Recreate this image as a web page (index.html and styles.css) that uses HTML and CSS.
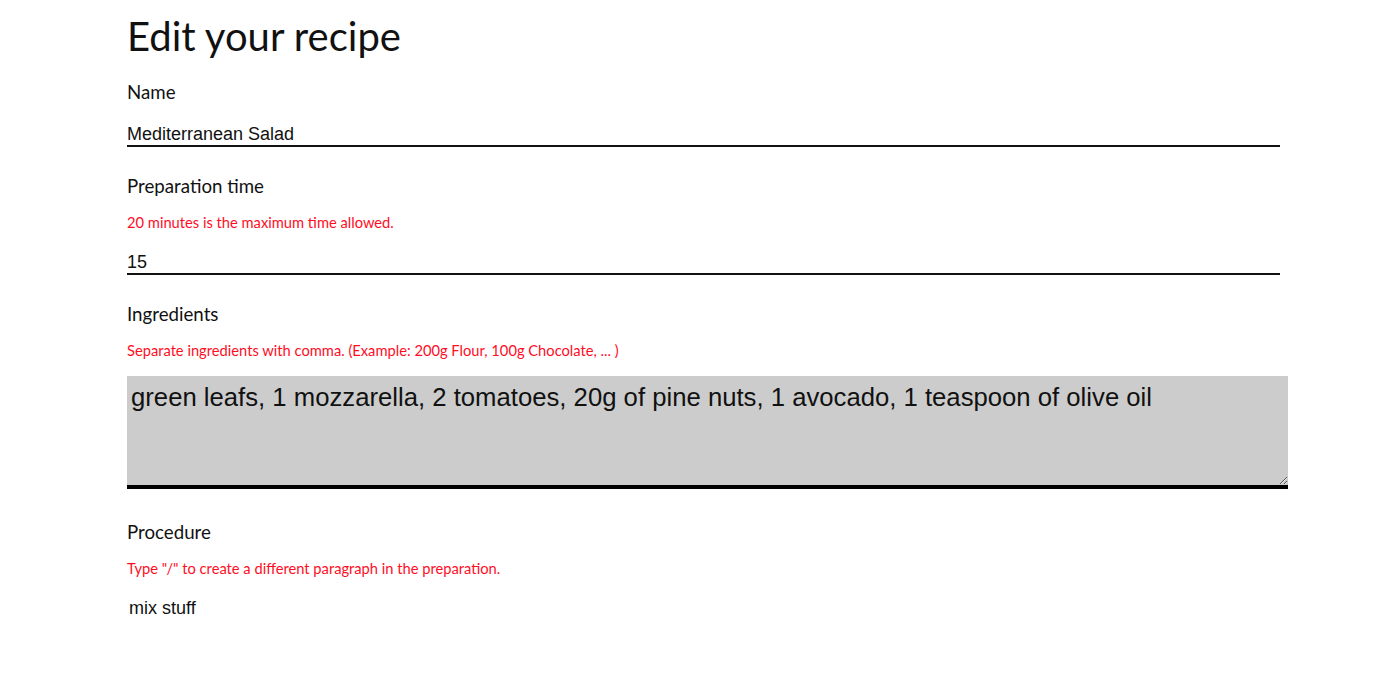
FILE: index.html
```html
<!DOCTYPE html>
<html lang="en">
<head>
<meta charset="utf-8">
<title>Edit your recipe</title>
<link rel="stylesheet" href="styles.css">
</head>
<body>
<main class="page">
  <h1 class="title">Edit your recipe</h1>
  <form class="recipe-form">
    <div class="field">
      <label class="label" for="name">Name</label>
      <input class="line-input" id="name" type="text" value="Mediterranean Salad">
    </div>
    <div class="field">
      <label class="label" for="time">Preparation time</label>
      <p class="hint">20 minutes is the maximum time allowed.</p>
      <input class="line-input" id="time" type="text" value="15">
    </div>
    <div class="field">
      <label class="label" for="ingredients">Ingredients</label>
      <p class="hint">Separate ingredients with comma. (Example: 200g Flour, 100g Chocolate, ... )</p>
      <textarea class="big-area" id="ingredients">green leafs, 1 mozzarella, 2 tomatoes, 20g of pine nuts, 1 avocado, 1 teaspoon of olive oil</textarea>
    </div>
    <div class="field">
      <label class="label" for="procedure">Procedure</label>
      <p class="hint">Type "/" to create a different paragraph in the preparation.</p>
      <textarea class="plain-area" id="procedure">mix stuff</textarea>
    </div>
  </form>
</main>
</body>
</html>
```
FILE: styles.css
```css
* { box-sizing: border-box; }

html, body {
  margin: 0;
  padding: 0;
  background: #fff;
  color: #111;
  font-family: Lato, "Open Sans", sans-serif;
}

.page {
  width: 1153px;
  margin-left: 127px;
  padding-top: 12px;
}

.title {
  margin: 0;
  font-size: 40px;
  line-height: 48px;
  font-weight: 400;
  color: #111;
}

.recipe-form {
  display: flex;
  flex-direction: column;
  gap: 27px;
  margin-top: 20px;
}

.field {
  display: flex;
  flex-direction: column;
  align-items: flex-start;
}

.label {
  font-size: 18.7px;
  line-height: 24px;
  color: #111;
  margin-bottom: 19px;
}

.hint {
  margin: -4px 0 20px;
  font-size: 14.7px;
  line-height: 18px;
  color: #ff0d1f;
}

.line-input {
  width: 100%;
  height: 24px;
  margin: 0;
  padding: 0;
  border: 0;
  border-bottom: 2px solid #111;
  background: transparent;
  font-family: "Liberation Sans", Arial, sans-serif;
  font-size: 18px;
  line-height: 22px;
  color: #111;
  outline: none;
}

.big-area {
  box-sizing: content-box;
  width: 100%;
  height: 103px;
  margin: -3px 0 0;
  padding: 6px 4px 0;
  border: 0;
  border-bottom: 4px solid #000;
  background: #cccccc;
  font-family: "Liberation Sans", Arial, sans-serif;
  font-size: 25.7px;
  line-height: 30px;
  color: #111;
  outline: none;
}

.field:has(.big-area) { margin-bottom: 4px; }

.plain-area {
  width: 100%;
  height: 60px;
  margin: -4px 0 0;
  padding: 4px 2px;
  border: 0;
  background: transparent;
  font-family: "Liberation Sans", Arial, sans-serif;
  font-size: 18px;
  line-height: 22px;
  color: #111;
  resize: none;
  outline: none;
}
```
